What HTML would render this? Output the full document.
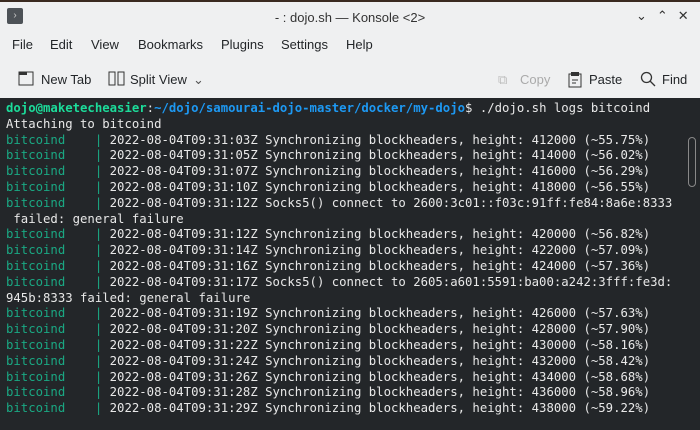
<!DOCTYPE html><html><head><style>
body{margin:0;width:700px;height:430px;overflow:hidden;background:#232629;font-family:"Liberation Sans",sans-serif;position:relative}
.top{position:absolute;left:0;top:0;width:700px;height:98px;background:#eff0f1;border-top:2px solid #3a2a20;box-sizing:border-box}
.ic{position:absolute;left:7px;top:6px;width:16px;height:16px;background:#4d5257;border-radius:2px;color:#ccc;font-size:10px;line-height:16px;text-align:center}
.title{position:absolute;left:0;width:700px;top:8px;text-align:center;font-size:13px;color:#333}
.menu{position:absolute;top:35px;font-size:13px;color:#232629}
.tb{position:absolute;top:70px;font-size:13px;color:#232629}
.term{position:absolute;left:6px;top:101px;font-family:"DejaVu Sans Mono","Liberation Mono",monospace;font-size:12.3px;line-height:15.8px;color:#e8e8e8;white-space:pre}
.g{color:#1cdc9a;font-weight:bold}.b{color:#1d99f3;font-weight:bold}.t{color:#1aa883}
.sb{position:absolute;left:688px;top:137px;width:6px;height:48px;border:1px solid #888;border-radius:4px}
</style></head><body>
<div class="top">
<div class="ic">›</div>
<div class="title">- : dojo.sh — Konsole &lt;2&gt;</div>
<div style="position:absolute;left:636px;top:6px;font-size:13px;color:#333;letter-spacing:10px">⌄⌃✕</div>
<span class="menu" style="left:12px">File</span><span class="menu" style="left:50px">Edit</span><span class="menu" style="left:91px">View</span><span class="menu" style="left:138px">Bookmarks</span><span class="menu" style="left:221px">Plugins</span><span class="menu" style="left:281px">Settings</span><span class="menu" style="left:346px">Help</span>
<svg style="position:absolute;left:18px;top:68px" width="18" height="18"><rect x="1" y="2" width="14" height="13" fill="none" stroke="#333"/><rect x="1" y="2" width="8" height="3" fill="#333"/></svg>
<span class="tb" style="left:41px">New Tab</span>
<svg style="position:absolute;left:108px;top:68px" width="18" height="18"><rect x="1" y="2" width="6" height="13" fill="none" stroke="#333"/><rect x="10" y="2" width="6" height="13" fill="none" stroke="#333"/></svg>
<span class="tb" style="left:130px">Split View</span><span class="tb" style="left:193px;color:#555">⌄</span>
<span class="tb" style="left:498px;color:#bbb">⧉</span><span class="tb" style="left:520px;color:#aaa">Copy</span>
<svg style="position:absolute;left:568px;top:69px" width="14" height="17"><rect x="1" y="3" width="12" height="13" fill="none" stroke="#333"/><rect x="3" y="1" width="8" height="4" fill="#333"/><path d="M4 9h6M4 12h4" stroke="#333"/></svg>
<span class="tb" style="left:589px">Paste</span>
<svg style="position:absolute;left:640px;top:69px" width="16" height="16"><circle cx="6.5" cy="6.5" r="5" fill="none" stroke="#333" stroke-width="1.3"/><path d="M10 10l5 5" stroke="#333" stroke-width="1.3"/></svg>
<span class="tb" style="left:662px">Find</span>
</div>
<div class="term"><span class="g">dojo@maketecheasier</span>:<span class="b">~/dojo/samourai-dojo-master/docker/my-dojo</span>$ ./dojo.sh logs bitcoind
Attaching to bitcoind
<span class="t">bitcoind    |</span> 2022-08-04T09:31:03Z Synchronizing blockheaders, height: 412000 (~55.75%)
<span class="t">bitcoind    |</span> 2022-08-04T09:31:05Z Synchronizing blockheaders, height: 414000 (~56.02%)
<span class="t">bitcoind    |</span> 2022-08-04T09:31:07Z Synchronizing blockheaders, height: 416000 (~56.29%)
<span class="t">bitcoind    |</span> 2022-08-04T09:31:10Z Synchronizing blockheaders, height: 418000 (~56.55%)
<span class="t">bitcoind    |</span> 2022-08-04T09:31:12Z Socks5() connect to 2600:3c01::f03c:91ff:fe84:8a6e:8333
 failed: general failure
<span class="t">bitcoind    |</span> 2022-08-04T09:31:12Z Synchronizing blockheaders, height: 420000 (~56.82%)
<span class="t">bitcoind    |</span> 2022-08-04T09:31:14Z Synchronizing blockheaders, height: 422000 (~57.09%)
<span class="t">bitcoind    |</span> 2022-08-04T09:31:16Z Synchronizing blockheaders, height: 424000 (~57.36%)
<span class="t">bitcoind    |</span> 2022-08-04T09:31:17Z Socks5() connect to 2605:a601:5591:ba00:a242:3fff:fe3d:
945b:8333 failed: general failure
<span class="t">bitcoind    |</span> 2022-08-04T09:31:19Z Synchronizing blockheaders, height: 426000 (~57.63%)
<span class="t">bitcoind    |</span> 2022-08-04T09:31:20Z Synchronizing blockheaders, height: 428000 (~57.90%)
<span class="t">bitcoind    |</span> 2022-08-04T09:31:22Z Synchronizing blockheaders, height: 430000 (~58.16%)
<span class="t">bitcoind    |</span> 2022-08-04T09:31:24Z Synchronizing blockheaders, height: 432000 (~58.42%)
<span class="t">bitcoind    |</span> 2022-08-04T09:31:26Z Synchronizing blockheaders, height: 434000 (~58.68%)
<span class="t">bitcoind    |</span> 2022-08-04T09:31:28Z Synchronizing blockheaders, height: 436000 (~58.96%)
<span class="t">bitcoind    |</span> 2022-08-04T09:31:29Z Synchronizing blockheaders, height: 438000 (~59.22%)</div>
<div class="sb"></div>
</body></html>
